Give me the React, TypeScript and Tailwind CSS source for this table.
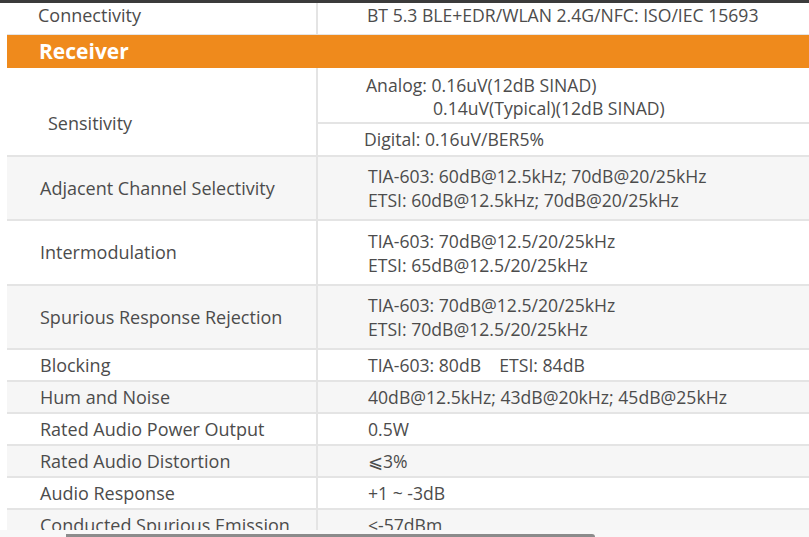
const font = { fontFamily: '"Open Sans", "Liberation Sans", sans-serif' };

const rows: { label: string; lines: string[]; h: string; gray: boolean }[] = [
  { label: 'Adjacent Channel Selectivity', lines: ['TIA-603: 60dB@12.5kHz; 70dB@20/25kHz', 'ETSI: 60dB@12.5kHz; 70dB@20/25kHz'], h: 'h-[64px]', gray: true },
  { label: 'Intermodulation', lines: ['TIA-603: 70dB@12.5/20/25kHz', 'ETSI: 65dB@12.5/20/25kHz'], h: 'h-[65px]', gray: false },
  { label: 'Spurious Response Rejection', lines: ['TIA-603: 70dB@12.5/20/25kHz', 'ETSI: 70dB@12.5/20/25kHz'], h: 'h-[64px]', gray: true },
  { label: 'Blocking', lines: ['TIA-603: 80dB\u00a0\u00a0\u00a0\u00a0ETSI: 84dB'], h: 'h-[32px]', gray: false },
  { label: 'Hum and Noise', lines: ['40dB@12.5kHz; 43dB@20kHz; 45dB@25kHz'], h: 'h-[32px]', gray: true },
  { label: 'Rated Audio Power Output', lines: ['0.5W'], h: 'h-[32px]', gray: false },
  { label: 'Rated Audio Distortion', lines: ['⩽3%'], h: 'h-[32px]', gray: true },
  { label: 'Audio Response', lines: ['+1 ~ -3dB'], h: 'h-[32px]', gray: false },
  { label: 'Conducted Spurious Emission', lines: ['≤-57dBm'], h: 'h-[32px]', gray: true },
];

function SpecRow({ label, lines, h, gray }: (typeof rows)[number]) {
  return (
    <div className={`flex ${h} shrink-0 border-b-2 border-[#e4e4e4] ${gray ? 'bg-[#f6f6f6]' : 'bg-white'}`}>
      <div className="w-[311px] shrink-0 border-r-2 border-[#e4e4e4] pl-[33px] flex items-center text-[18px] whitespace-nowrap">
        {label}
      </div>
      <div className="flex-1 pl-[50px] flex flex-col justify-center leading-[24px]">
        {lines.map((l, i) => (
          <div key={i} className="whitespace-pre">{l}</div>
        ))}
      </div>
    </div>
  );
}

export default function App() {
  return (
    <div className="w-[809px] h-[537px] overflow-hidden bg-white flex flex-col text-[17.6px] text-[#4c4c4c]" style={font}>
      <div className="h-[3px] shrink-0 bg-[#3b3b3b]" />
      <div className="h-[527px] shrink-0 overflow-hidden pl-[7px] flex flex-col">
        {/* Connectivity */}
        <div className="flex h-[32px] shrink-0 border-b border-[#e4e4e4]">
          <div className="w-[311px] shrink-0 border-r-2 border-[#e4e4e4] pl-[31px] pb-[6px] flex items-center text-[18px]">
            Connectivity
          </div>
          <div className="flex-1 pl-[49px] pb-[6px] flex items-center whitespace-nowrap">
            BT 5.3 BLE+EDR/WLAN 2.4G/NFC: ISO/IEC 15693
          </div>
        </div>

        {/* Receiver header */}
        <div className="h-[33px] shrink-0 bg-[#ef8a1c] text-white font-bold text-[21px] pl-[32px] flex items-center">
          Receiver
        </div>

        {/* Sensitivity */}
        <div className="flex h-[89px] shrink-0 border-b-2 border-[#e4e4e4] bg-white">
          <div className="w-[311px] shrink-0 border-r-2 border-[#e4e4e4] pl-[41px] pt-[24px] flex items-center text-[18px]">
            Sensitivity
          </div>
          <div className="flex-1 flex flex-col">
            <div className="h-[56px] border-b-2 border-[#e4e4e4] pl-[48px] flex flex-col justify-center leading-[23px] pt-[3px]">
              <div>Analog: 0.16uV(12dB SINAD)</div>
              <div className="pl-[67px]">0.14uV(Typical)(12dB SINAD)</div>
            </div>
            <div className="flex-1 pl-[46px] flex items-center">Digital: 0.16uV/BER5%</div>
          </div>
        </div>

        {rows.map((r) => (
          <SpecRow key={r.label} {...r} />
        ))}
      </div>

      {/* horizontal scrollbar */}
      <div className="h-[7px] shrink-0 bg-[#f8f8f8] flex items-end pl-[66px]">
        <div className="w-[529px] h-[3px] bg-[#8c8c8c] rounded-tr-[3px]" />
      </div>
    </div>
  );
}
